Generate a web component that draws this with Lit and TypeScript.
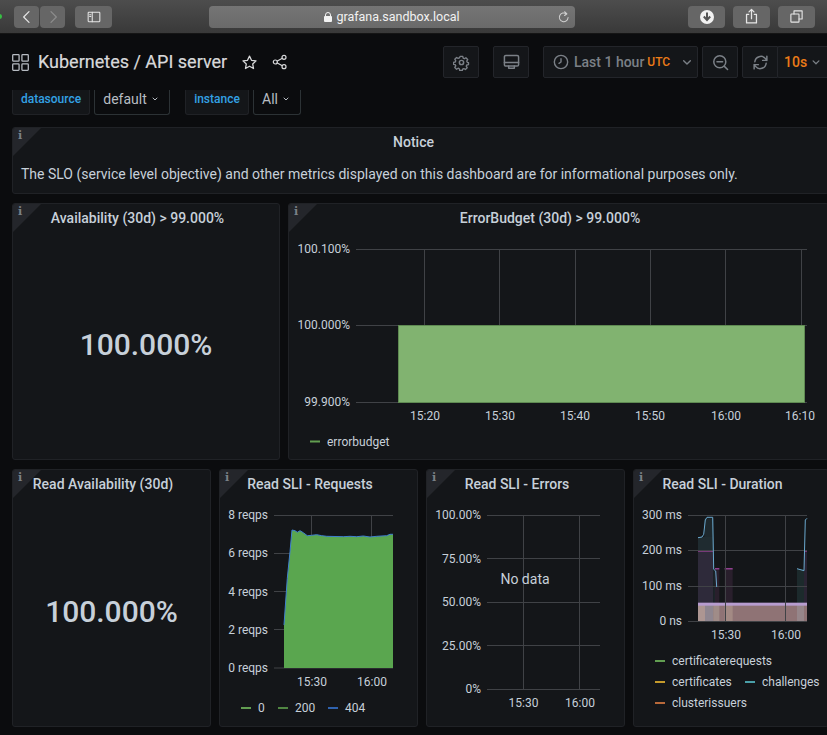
import { LitElement, html, css, svg } from "lit";
import { customElement } from "lit/decorators.js";

const i = (p: any, w = 16, h = 16, vb = "0 0 24 24") => html`<svg class="ic" width=${w} height=${h} viewBox=${vb} fill="none" stroke="currentColor" stroke-width="1.8" stroke-linecap="round" stroke-linejoin="round">${p}</svg>`;

const chevron = svg`<path d="M7 10l5 5 5-5"/>`;
const chevronBold = svg`<path d="M6 9l6 6 6-6" stroke-width="3"/>`;

type Box = { x: number; y: number; w: number; h: number };

function chart(b: Box, body: any) {
  const vw = b.w - 2, vh = b.h - 32;
  return html`<svg class="chart" width=${vw} height=${vh} viewBox="${b.x + 1} ${b.y + 31} ${vw} ${vh}">${body}</svg>`;
}
const hLines = (ys: number[], x1: number, x2: number) => ys.map((y) => svg`<line class="grid" x1=${x1} x2=${x2} y1=${y} y2=${y}></line>`);
const vLines = (xs: number[], y1: number, y2: number) => xs.map((x) => svg`<line class="grid" x1=${x} x2=${x} y1=${y1} y2=${y2}></line>`);
const yLabels = (ls: [string, number][], x: number) => ls.map(([t, y]) => svg`<text class="axis" x=${x} y=${y + 4} text-anchor="end">${t}</text>`);
const xLabels = (ls: [string, number][], y: number) => ls.map(([t, x]) => svg`<text class="axis" x=${x} y=${y + 4} text-anchor="middle">${t}</text>`);
const legend = (ls: [string, string, number, number, number][]) =>
  ls.map(([t, c, lx, tx, y]) => svg`<line x1=${lx} x2=${lx + 10} y1=${y} y2=${y} stroke=${c} stroke-width="2"></line><text class="axis" x=${tx} y=${y + 4}>${t}</text>`);

const budget = chart({ x: 288, y: 203, w: 541, h: 257 }, svg`
  ${hLines([249.5, 325.5, 402.5], 356, 807)}
  ${vLines([424.5, 499.5, 575.5, 650.5, 725.5, 801.5], 249, 402)}
  <rect x="398.5" y="325.5" width="406" height="77" fill="#81b370" stroke="#5f8a52"></rect>
  ${yLabels([["100.100%", 248.5], ["100.000%", 325], ["99.900%", 401.5]], 350)}
  ${xLabels([["15:20", 425], ["15:30", 500], ["15:40", 575], ["15:50", 650], ["16:00", 726], ["16:10", 800]], 416)}
  ${legend([["errorbudget", "#629e51", 310, 327, 441.5]])}
`);

const reqPts = [[222, 480], [232, 340], [240, 260], [246, 195], [255, 197], [262, 202], [270, 197], [280, 203], [292, 212], [305, 211], [320, 209], [335, 212], [350, 214], [400, 215], [420, 214], [440, 215], [460, 213], [480, 216], [500, 214], [530, 212], [540, 208], [549, 208]]
  .map(([x, y]) => `${(210 + x / 3).toFixed(1)},${(465 + y / 3).toFixed(1)}`).join(" ");

const requests = chart({ x: 219, y: 469, w: 199, h: 258 }, svg`
  ${hLines([515.5, 553.5, 591.5, 629.5, 668], 274, 393)}
  ${vLines([311.5, 371.5], 515, 668)}
  <polygon points="284,668 ${reqPts} 393,668" fill="#5aa64f"></polygon>
  <polyline points=${reqPts} fill="none" stroke="#3f80cf" stroke-width="1"></polyline>
  ${yLabels([["8 reqps", 515], ["6 reqps", 553], ["4 reqps", 592], ["2 reqps", 630], ["0 reqps", 668]], 268)}
  ${xLabels([["15:30", 312], ["16:00", 372]], 682)}
  ${legend([["0", "#629e51", 241, 258, 708], ["200", "#508642", 278, 295, 708], ["404", "#2f62ae", 328, 345, 708]])}
`);

const errors = chart({ x: 426, y: 469, w: 199, h: 258 }, svg`
  ${hLines([515.5, 558.5, 602.5, 645.5, 689.5], 487, 600)}
  ${vLines([523.5, 579.5], 515, 689)}
  ${yLabels([["100.00%", 514.5], ["75.00%", 558.5], ["50.00%", 602], ["25.00%", 645.5], ["0%", 689]], 481)}
  ${xLabels([["15:30", 523.5], ["16:00", 580]], 702.5)}
  <text class="nodata" x="525" y="584" text-anchor="middle">No data</text>
`);

const zx = (z: number) => 625 + z / 3;
const zy = (z: number) => 465 + z / 3;
const line = (pts: number[][]) => pts.map(([x, y]) => `${zx(x).toFixed(1)},${zy(y).toFixed(1)}`).join(" ");
const zr = (x1: number, y1: number, x2: number, y2: number, fill: string) => svg`<rect x=${zx(x1)} y=${zy(y1)} width=${(x2 - x1) / 3} height=${(y2 - y1) / 3} fill=${fill}></rect>`;

const duration = chart({ x: 633, y: 469, w: 196, h: 258 }, svg`
  ${zr(219, 216, 265, 258, "#1f2b30")}
  ${zr(219, 258, 265, 414, "#2e2a3a")}
  ${zr(238, 160, 265, 216, "#1d282d")}
  ${zr(265, 312, 275, 414, "#1c2429")}
  ${zr(270, 312, 283, 414, "#291f2c")}
  ${zr(299, 312, 323, 414, "#291f2c")}
  ${zr(516, 312, 537, 414, "#1c2a2c")}
  ${zr(537, 258, 546, 414, "#2a2333")}
  ${zr(219, 414, 546, 469, "#8f7375")}
  ${zr(219, 414, 240, 469, "#ad9692")}
  ${zr(240, 414, 265, 469, "#8f8690")}
  ${zr(265, 414, 283, 469, "#a08c88")}
  ${zr(299, 414, 323, 469, "#a38a84")}
  ${zr(516, 414, 537, 469, "#96868a")}
  ${zr(219, 413, 546, 422, "#b79ccf")}
  <line x1=${zx(219)} x2=${zx(265)} y1=${zy(258)} y2=${zy(258)} stroke="#91408f" stroke-width="1.5"></line>
  <line x1=${zx(270)} x2=${zx(283)} y1=${zy(311)} y2=${zy(311)} stroke="#91408f" stroke-width="1.5"></line>
  <line x1=${zx(299)} x2=${zx(323)} y1=${zy(311)} y2=${zy(311)} stroke="#91408f" stroke-width="1.5"></line>
  <line x1=${zx(537)} x2=${zx(546)} y1=${zy(258)} y2=${zy(258)} stroke="#91408f" stroke-width="1.5"></line>
  ${hLines([515.5, 550.5, 586.5, 621.5], 688, 807)}
  ${vLines([725.5, 785.5], 515, 621)}
  <polyline points=${line([[219, 218], [231, 216], [236, 208], [241, 165], [246, 157], [263, 157], [266, 313], [272, 318], [275, 366]])} fill="none" stroke="#6aa9cf" stroke-width="1"></polyline>
  <polyline points=${line([[516, 311], [537, 317], [541, 165], [546, 160]])} fill="none" stroke="#6aa9cf" stroke-width="1"></polyline>
  ${yLabels([["300 ms", 515], ["200 ms", 550], ["100 ms", 586], ["0 ns", 621]], 682)}
  ${xLabels([["15:30", 726], ["16:00", 786]], 634.5)}
  ${legend([["certificaterequests", "#629e51", 655, 672, 661], ["certificates", "#c49a2b", 655, 672, 682], ["challenges", "#4a9fa8", 745, 762, 682], ["clusterissuers", "#b8693a", 655, 672, 703]])}
`);

@customElement("app-root")
export class AppRoot extends LitElement {
  static styles = css`
    :host { display: block; width: 827px; height: 735px; overflow: hidden; background: #0b0c0e; font-family: Roboto, "Liberation Sans", sans-serif; color: #c7d0d9; }
    * { box-sizing: border-box; }
    .ic { display: block; flex: none; }
    .browser { height: 34px; display: flex; align-items: center; padding: 0 0 0 14px; background: linear-gradient(#4d4d4d, #393939); border-bottom: 1px solid #151515; position: relative; color: #e6e6e6; }
    .dot { position: absolute; left: -3px; top: 14px; width: 5px; height: 5px; border-radius: 50%; background: #37c043; }
    .bbtn { height: 22px; background: #666; border-radius: 4px; display: flex; align-items: center; justify-content: center; }
    .back { width: 25px; margin-right: 1px; }
    .fwd { width: 25px; margin-right: 10px; color: #8d8d8d; }
    .side { width: 37px; margin-right: 97px; }
    .url { width: 366px; height: 22px; background: linear-gradient(#757575, #6a6a6a); border-radius: 4px; display: flex; align-items: center; justify-content: center; gap: 4px; font-size: 12.5px; position: relative; margin-right: 113px; color: #f2f2f2; }
    .reload { position: absolute; right: 4px; top: 4px; color: #cfcfcf; }
    .act { width: 37px; margin-right: 8px; }
    .top { height: 56px; display: flex; align-items: flex-start; padding: 12px 0 0 12px; position: relative; }
    .title { font-size: 18px; font-weight: 400; margin: 5px 0 0 9px; color: #d8d9da; white-space: nowrap; -webkit-text-stroke: 0.2px #d8d9da; }
    .hicon { color: #b7bcc2; margin-top: 8px; }
    .star { margin: 8px 0 0 14px; color: #d8d9da; }
    .shr { margin: 8px 0 0 14px; color: #d8d9da; }
    .tools { position: absolute; left: 443px; top: 12px; display: flex; height: 32px; }
    .tb { height: 32px; border: 1px solid #23252a; border-radius: 2px; background: #141619; display: flex; align-items: center; justify-content: center; color: #7b8087; }
    .tb .ic { stroke-width: 2.1; }
    .sq { width: 36px; }
    .gapL { margin-right: 14px; }
    .range { width: 155px; margin-right: 4px; justify-content: flex-start; padding-left: 9px; font-size: 14px; font-weight: 500; gap: 5px; white-space: nowrap; }
    .utc { color: #eb7b18; font-size: 12px; font-weight: 500; margin-left: -2px; }
    .rchev { margin-left: 4px; }
    .ref { margin-left: 4px; border-radius: 2px 0 0 2px; }
    .ten { width: 60px; margin-left: -1px; color: #eb7b18; font-size: 14px; font-weight: 500; justify-content: flex-start; padding-left: 6px; gap: 2px; }
    .ten .ic { color: #7b8087; }
    .vars { height: 25px; display: flex; padding-left: 12px; overflow: hidden; font-size: 14px; align-items: stretch; }
    .lab, .sel { display: flex; align-items: center; border: 1px solid #202226; border-top: none; border-radius: 0 0 3px 3px; padding-bottom: 6px; white-space: nowrap; }
    .lab { background: #141619; color: #33a2e5; font-size: 12px; font-weight: 500; justify-content: center; }
    .sel { background: #0b0c0e; border-color: #2c3235; margin-left: 4px; justify-content: center; gap: 4px; color: #b7bcc2; padding-right: 2px; }
    .l1 { width: 78px; } .s1 { width: 76px; margin-right: 15px; } .l2 { width: 64px; } .s2 { width: 48px; }
    .rows { margin: 12px 0 0 12px; width: 817px; display: flex; flex-direction: column; gap: 9px; }
    .panel { background: #141619; border: 1px solid #202226; border-radius: 3px; position: relative; display: flex; flex-direction: column; overflow: hidden; }
    .corner { position: absolute; left: 0; top: 0; width: 0; height: 0; border-style: solid; border-width: 28px 28px 0 0; border-color: #24262b transparent transparent transparent; }
    .info { position: absolute; left: 5px; top: 1px; font: bold 11px "DejaVu Serif", serif; color: #7b8087; }
    .ptitle { height: 30px; flex: none; display: flex; align-items: center; justify-content: center; font-size: 14px; font-weight: 500; padding: 0 17px 2px 0; white-space: nowrap; color: #c7d0d9; }
    .notice .ptitle { padding-right: 14px; }
    .notice { height: 67px; }
    .ntext { padding: 6px 0 0 8px; font-size: 14px; line-height: 20px; white-space: nowrap; color: #c7d0d9; }
    .r2 { display: grid; grid-template-columns: 268px 541px; gap: 8px; height: 257px; }
    .r3 { display: grid; grid-template-columns: 199px 199px 199px 196px; gap: 8px; height: 258px; }
    .big { flex: 1; display: flex; align-items: center; justify-content: center; font-size: 30px; font-weight: 500; color: #c7d0d9; padding: 0 0 4px 0; }
    .chart { display: block; flex: none; }
    .grid { stroke: #404246; stroke-width: 1; }
    .axis { font-size: 12px; fill: #c7d0d9; font-family: Roboto, "Liberation Sans", sans-serif; }
    .nodata { font-size: 14px; fill: #c7d0d9; font-family: Roboto, "Liberation Sans", sans-serif; }
  `;

  panel(title: string, body: any, extra = "") {
    return html`<div class="panel ${extra}"><div class="corner"></div><span class="info">i</span><div class="ptitle">${title}</div>${body}</div>`;
  }

  render() {
    return html`
      <div class="browser">
        <span class="dot"></span>
        <div class="bbtn back">${i(svg`<path d="M15 4l-8 8 8 8"/>`, 16, 16)}</div>
        <div class="bbtn fwd">${i(svg`<path d="M9 4l8 8-8 8"/>`, 16, 16)}</div>
        <div class="bbtn side">${i(svg`<rect x="2" y="4" width="20" height="16" rx="1"/><path d="M9 4v16M4.5 8h2M4.5 11h2"/>`, 16, 14)}</div>
        <div class="url">
          ${html`<svg class="ic" width="8" height="10" viewBox="0 0 8 10"><path d="M1.5 4V3a2.5 2.5 0 015 0v1" fill="none" stroke="currentColor" stroke-width="1"/><rect x="0" y="4" width="8" height="6" rx="1" fill="currentColor"/></svg>`}
          <span>grafana.sandbox.local</span>
          <span class="reload">${i(svg`<path d="M19 13a7.5 7.5 0 11-3-6.5"/><path d="M13 3l4 3.5-4 3" />`, 14, 14)}</span>
        </div>
        <div class="bbtn act">${html`<svg class="ic" width="14" height="14" viewBox="0 0 14 14"><circle cx="7" cy="7" r="7" fill="#f2f2f2"/><path d="M7 2.5v7M3.8 6.5L7 10l3.2-3.5" fill="none" stroke="#555" stroke-width="2"/></svg>`}</div>
        <div class="bbtn act">${i(svg`<path d="M8 9H5v12h14V9h-3M12 15V2M8.5 5.5L12 2l3.5 3.5"/>`, 17, 17)}</div>
        <div class="bbtn act">${i(svg`<rect x="3" y="8" width="13" height="13" rx="1"/><path d="M8 8V3h13v13h-5"/>`, 15, 15)}</div>
      </div>

      <div class="top">
        <span class="hicon">${i(svg`<rect x="1" y="1" width="9" height="9" rx="1"/><rect x="14" y="1" width="9" height="9" rx="1"/><rect x="1" y="14" width="9" height="9" rx="1"/><rect x="14" y="14" width="9" height="9" rx="1"/>`, 17, 17)}</span>
        <span class="title">Kubernetes / API server</span>
        <span class="star">${i(svg`<path d="M12 3l2.8 5.9 6.4.8-4.7 4.4 1.2 6.4-5.7-3.2-5.7 3.2 1.2-6.4L2.8 9.7l6.4-.8z"/>`, 17, 17)}</span>
        <span class="shr">${i(svg`<circle cx="18" cy="5" r="3"/><circle cx="5" cy="12" r="3"/><circle cx="18" cy="19" r="3"/><path d="M8 10.5l7.5-4M8 13.5l7.5 4"/>`, 16, 16)}</span>
        <div class="tools">
          <div class="tb sq gapL">${i(svg`<circle cx="12" cy="12" r="3"/><path d="M10 2.5h4l.6 2.8 1.9.8 2.4-1.5 2.8 2.8-1.5 2.4.8 1.9 2 .6v3l-2.8.6-.8 1.9 1.5 2.4-2.8 2.8-2.4-1.5-1.9.8-.6 2.3h-4l-.6-2.8-1.9-.8-2.4 1.5-2.8-2.8 1.5-2.4-.8-1.9-2.8-.6v-3l2.8-.6.8-1.9-1.5-2.4 2.8-2.8 2.4 1.5 1.9-.8z" transform="translate(1.2 1.2) scale(.9)"/>`, 17, 17)}</div>
          <div class="tb sq gapL">${i(svg`<rect x="2" y="2" width="20" height="15" rx="2"/><path d="M2 12h20M8 17v3h8v-3"/>`, 17, 17)}</div>
          <div class="tb range">
            ${i(svg`<circle cx="12" cy="12" r="10"/><path d="M12 7v5l-3 2"/>`, 16, 16)}
            <span>Last 1 hour</span><span class="utc">UTC</span>
            <span class="rchev">${i(chevron, 16, 16)}</span>
          </div>
          <div class="tb sq">${i(svg`<circle cx="11" cy="11" r="8.5"/><path d="M7 11h8M17.5 17.5L22 22"/>`, 17, 17)}</div>
          <div class="tb sq ref">${i(svg`<path d="M4 11a8.5 8.5 0 0115-4.5L21 9M20 13a8.5 8.5 0 01-15 4.5L3 15M21 3v6h-6M3 21v-6h6"/>`, 17, 17)}</div>
          <div class="tb ten"><span>10s</span>${i(chevron, 14, 14)}</div>
        </div>
      </div>

      <div class="vars">
        <div class="lab l1">datasource</div>
        <div class="sel s1">default ${i(chevronBold, 8, 8)}</div>
        <div class="lab l2">instance</div>
        <div class="sel s2">All ${i(chevronBold, 8, 8)}</div>
      </div>

      <div class="rows">
        ${this.panel("Notice", html`<div class="ntext">The SLO (service level objective) and other metrics displayed on this dashboard are for informational purposes only.</div>`, "notice")}
        <div class="r2">
          ${this.panel("Availability (30d) > 99.000%", html`<div class="big">100.000%</div>`)}
          ${this.panel("ErrorBudget (30d) > 99.000%", budget)}
        </div>
        <div class="r3">
          ${this.panel("Read Availability (30d)", html`<div class="big">100.000%</div>`)}
          ${this.panel("Read SLI - Requests", requests)}
          ${this.panel("Read SLI - Errors", errors)}
          ${this.panel("Read SLI - Duration", duration)}
        </div>
      </div>
    `;
  }
}
